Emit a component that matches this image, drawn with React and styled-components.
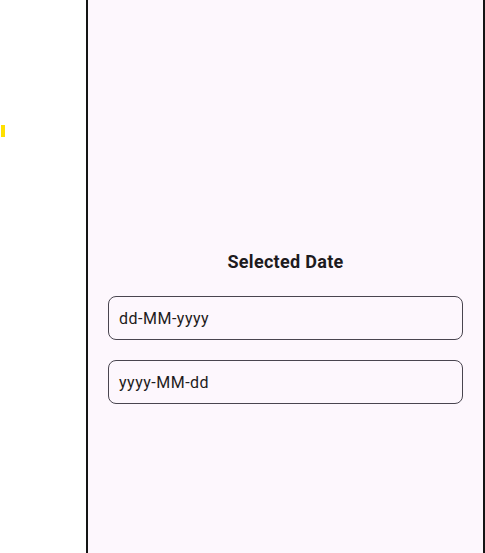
import React from "react";
import styled, { createGlobalStyle } from "styled-components";

const GlobalStyle = createGlobalStyle`
  body {
    margin: 0;
    font-family: Roboto, "Noto Sans", sans-serif;
    background: #ffffff;
  }
`;

const Page = styled.div`
  display: flex;
  height: 553px;
  width: 485px;
  overflow: hidden;
`;

const Side = styled.div`
  width: 86px;
  flex-shrink: 0;
  padding-top: 125px;
  box-sizing: border-box;
`;

const Marker = styled.div`
  width: 4px;
  height: 12px;
  margin-left: 1px;
  background: #ffe000;
`;

const Panel = styled.div`
  flex: 1;
  display: flex;
  flex-direction: column;
  background: #fdf7fd;
  border-left: 2px solid #141414;
  border-right: 2px solid #141414;
  padding: 250px 20px 0;
`;

const Title = styled.h2`
  margin: 0 0 22px;
  font-size: 18px;
  line-height: 24px;
  font-weight: 700;
  letter-spacing: 0.3px;
  color: #1d1b20;
  text-align: center;
`;

const Field = styled.div`
  display: flex;
  align-items: center;
  height: 44px;
  box-sizing: border-box;
  border: 1px solid #49454f;
  border-radius: 8px;
  padding-left: 10px;
  margin-bottom: 20px;
  font-size: 16px;
  letter-spacing: 0.5px;
  color: #1d1b20;
`;

export default function App() {
  return (
    <>
      <GlobalStyle />
      <Page>
        <Side>
          <Marker />
        </Side>
        <Panel>
          <Title>Selected Date</Title>
          <Field>dd-MM-yyyy</Field>
          <Field>yyyy-MM-dd</Field>
        </Panel>
      </Page>
    </>
  );
}
